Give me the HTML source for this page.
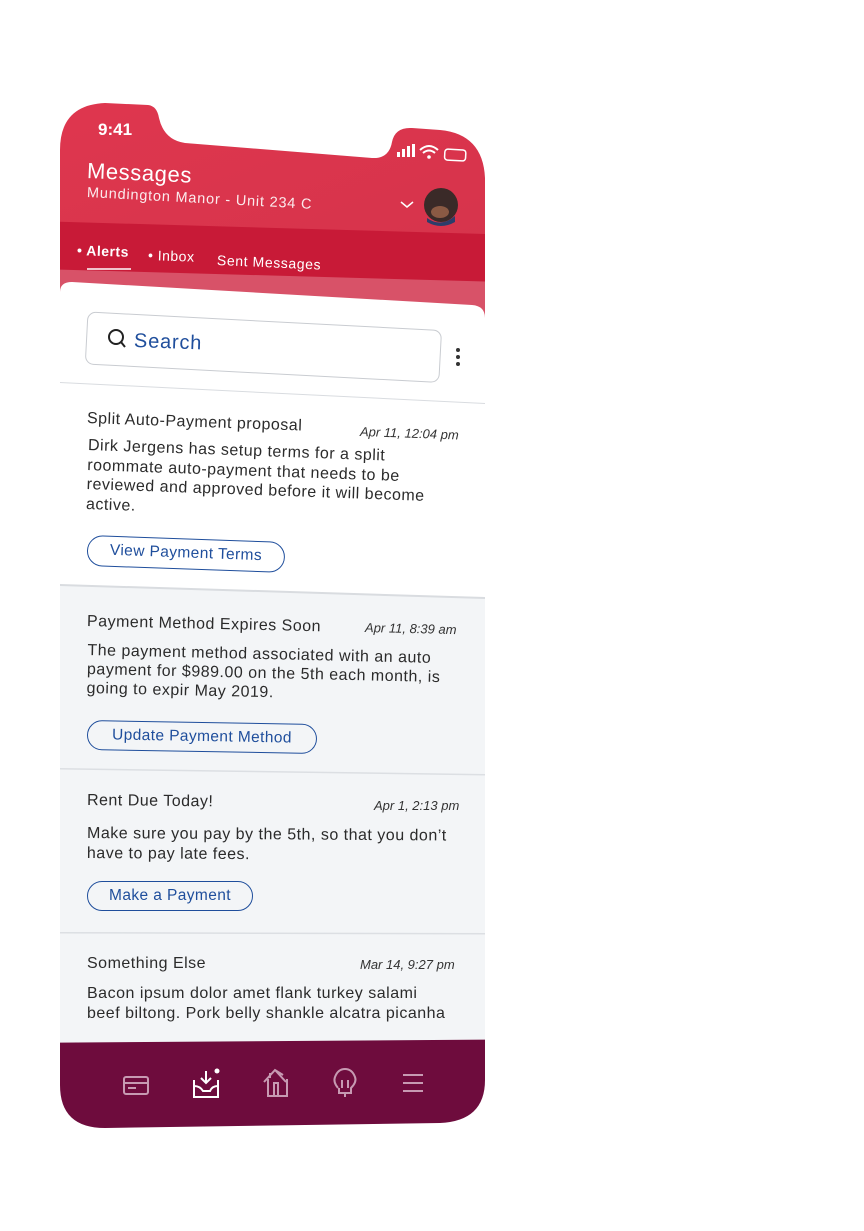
<!DOCTYPE html>
<html><head><meta charset="utf-8"><style>
body{margin:0;width:864px;height:1231px;background:#fff;position:relative;overflow:hidden;font-family:"Liberation Sans",sans-serif;}
.t{position:absolute;white-space:nowrap;transform-origin:0 50%;}
.w{color:#fff}
.d{color:#2b2b2b;letter-spacing:0.5px}
.b{position:absolute;border:1.5px solid #1f4e9c;border-radius:16px;color:#1f4e9c;font-size:15.5px;letter-spacing:0.4px;text-align:center;transform-origin:0 50%;box-sizing:border-box;line-height:27px;}
.dt{font-style:italic;font-size:13px;color:#333}
</style></head><body>
<svg width="864" height="1231" style="position:absolute;left:0;top:0">
<defs>
<clipPath id="ph"><path d="M60,150 Q60,105 105,103 L148,105 Q157,106 159,118 Q164,140 185,143 L372,158 Q389,159 392,142 Q395,127 412,128 L440,130 Q483,134 485,178 L485,1080 Q485,1121 440,1123 L105,1128 Q60,1128 60,1085 Z"/></clipPath>
<linearGradient id="rg" x1="0" y1="0" x2="1" y2="1"><stop offset="0" stop-color="#e2384f"/><stop offset="1" stop-color="#d0314a"/></linearGradient>
</defs>
<g clip-path="url(#ph)">
<rect x="0" y="0" width="864" height="1231" fill="#f3f5f7"/>
<rect x="0" y="0" width="864" height="320" fill="url(#rg)"/>
<polygon points="0,220 864,245 864,400 0,400" fill="#c81a37"/>
<polygon points="0,268 864,292 864,400 0,400" fill="#d85268"/>
<path d="M60,292 Q60,282 72,282 L472,305 Q485,306 485,318 L485,600 L60,600 Z" fill="#fff"/>
<polygon points="60,585 485,598 485,600 60,600" fill="#f3f5f7"/>
<polygon points="60,382 485,403 485,404 60,383" fill="#d9dce0"/>
<polygon points="60,584 485,597 485,599 60,586" fill="#d9dce0"/>
<polygon points="60,768 485,774 485,775.5 60,769.5" fill="#dcdfe3"/>
<polygon points="60,932 485,933 485,934.5 60,933.5" fill="#dcdfe3"/>
<polygon points="0,1043 864,1037 864,1231 0,1231" fill="#6e0c3d"/>
</g>
<rect x="88" y="312" width="354" height="52" rx="8" fill="#fff" stroke="#c9ccd1" transform="rotate(3 88 312)"/>
<circle cx="116" cy="337" r="7" fill="none" stroke="#222" stroke-width="2"/><line x1="121" y1="342" x2="125" y2="347" stroke="#222" stroke-width="2"/>
<circle cx="458" cy="350" r="2" fill="#333"/><circle cx="458" cy="357" r="2" fill="#333"/><circle cx="458" cy="364" r="2" fill="#333"/>
<rect x="397" y="152" width="3" height="5" fill="#fff"/><rect x="402" y="149" width="3" height="8" fill="#fff"/><rect x="407" y="146" width="3" height="11" fill="#fff"/><rect x="412" y="144" width="3" height="13" fill="#fff"/>
<path d="M420,150 Q429,142 438,150 M423,153 Q429,148 435,153" stroke="#fff" stroke-width="2" fill="none"/><circle cx="429" cy="157" r="1.8" fill="#fff"/>
<rect x="445" y="149" width="21" height="11" rx="3" fill="none" stroke="#fff" stroke-width="1.5" transform="rotate(3 445 149)"/>
<path d="M401,202 L407,207 L413,202" stroke="#fff" stroke-width="1.5" fill="none"/>
<circle cx="441" cy="205" r="17" fill="#3a2a28"/><ellipse cx="440" cy="212" rx="9" ry="6" fill="#8a5a44"/><path d="M427,218 Q441,228 455,216 L455,222 Q441,230 427,222Z" fill="#2c3d6a"/>
<g stroke="#c79ab2" stroke-width="2" fill="none">
<rect x="124" y="1077" width="24" height="17" rx="2"/><line x1="124" y1="1083" x2="148" y2="1083"/><line x1="128" y1="1088" x2="136" y2="1088"/>
<path d="M283,1075 L275,1070 L264,1082 M268,1079 V1096 H287 V1079 M286,1082 L275,1070 M270,1073 V1078 M274,1095 V1083 H278 V1095"/>
<path d="M345,1097 V1092 M338,1088 Q333,1082 335,1077 Q338,1069 345,1069 Q352,1069 355,1077 Q357,1082 351,1088 L351,1093 H339 L339,1088 M342,1088 V1080 M348,1088 V1080"/>
<line x1="403" y1="1075" x2="423" y2="1075"/><line x1="403" y1="1083" x2="423" y2="1083"/><line x1="403" y1="1091" x2="423" y2="1091"/>
</g>
<g stroke="#fff" stroke-width="2" fill="none"><path d="M194,1080 V1097 H218 V1080 M194,1086 Q200,1086 203,1091 H210 Q212,1086 218,1086 M206,1071 V1083 M201,1078 L206,1083 L211,1078"/></g>
<circle cx="217" cy="1071" r="2.5" fill="#fff"/>
</svg>
<div class="t w" style="left:98px;top:120px;font-size:17px;font-weight:bold;">9:41</div>
<div class="t w" style="left:87px;top:158px;font-size:22px;letter-spacing:0.6px;transform:rotate(2.5deg)">Messages</div>
<div class="t w" style="left:87px;top:185px;font-size:14.5px;letter-spacing:0.8px;opacity:.9;transform:rotate(3deg)">Mundington Manor - Unit 234 C</div>
<div class="t w" style="left:77px;top:242px;font-size:14px;font-weight:bold;letter-spacing:0.5px;transform:rotate(2deg)">• Alerts</div>
<div style="position:absolute;left:87px;top:268px;width:44px;height:2px;background:#f0c3cb;"></div>
<div class="t w" style="left:148px;top:247px;font-size:14px;letter-spacing:0.5px;transform:rotate(2deg)">• Inbox</div>
<div class="t w" style="left:217px;top:252px;font-size:14px;letter-spacing:0.6px;transform:rotate(2.5deg)">Sent Messages</div>
<div class="t" style="left:134px;top:330px;font-size:20px;letter-spacing:0.8px;color:#1f4e9c;transform:rotate(2deg)">Search</div>

<div class="t d" style="left:87px;top:410px;font-size:16px;transform:rotate(2deg)">Split Auto-Payment proposal</div>
<div class="t dt" style="left:360px;top:424px;transform:rotate(2deg)">Apr 11, 12:04 pm</div>
<div class="t d" style="left:87px;top:436px;font-size:16px;line-height:19.5px;transform:rotate(2deg)">Dirk Jergens has setup terms for a split<br>roommate auto-payment that needs to be<br>reviewed and approved before it will become<br>active.</div>
<div class="b" style="left:87px;top:535px;width:198px;height:31px;transform:rotate(2deg)">View Payment Terms</div>

<div class="t d" style="left:87px;top:613px;font-size:16px;transform:rotate(1.3deg)">Payment Method Expires Soon</div>
<div class="t dt" style="left:365px;top:620px;transform:rotate(1.3deg)">Apr 11, 8:39 am</div>
<div class="t d" style="left:87px;top:641px;font-size:16px;line-height:19px;transform:rotate(1.3deg)">The payment method associated with an auto<br>payment for $989.00 on the 5th each month, is<br>going to expir May 2019.</div>
<div class="b" style="left:87px;top:720px;width:230px;height:30px;transform:rotate(1deg)">Update Payment Method</div>

<div class="t d" style="left:87px;top:792px;font-size:16px;transform:rotate(.6deg)">Rent Due Today!</div>
<div class="t dt" style="left:374px;top:798px;">Apr 1, 2:13 pm</div>
<div class="t d" style="left:87px;top:824px;font-size:16px;line-height:19.5px;transform:rotate(.4deg)">Make sure you pay by the 5th, so that you don’t<br>have to pay late fees.</div>
<div class="b" style="left:87px;top:881px;width:166px;height:30px;">Make a Payment</div>

<div class="t d" style="left:87px;top:955px;font-size:16px;">Something Else</div>
<div class="t dt" style="left:360px;top:957px;">Mar 14, 9:27 pm</div>
<div class="t d" style="left:87px;top:984px;font-size:16px;line-height:19.5px;">Bacon ipsum dolor amet flank turkey salami<br>beef biltong. Pork belly shankle alcatra picanha</div>
</body></html>
